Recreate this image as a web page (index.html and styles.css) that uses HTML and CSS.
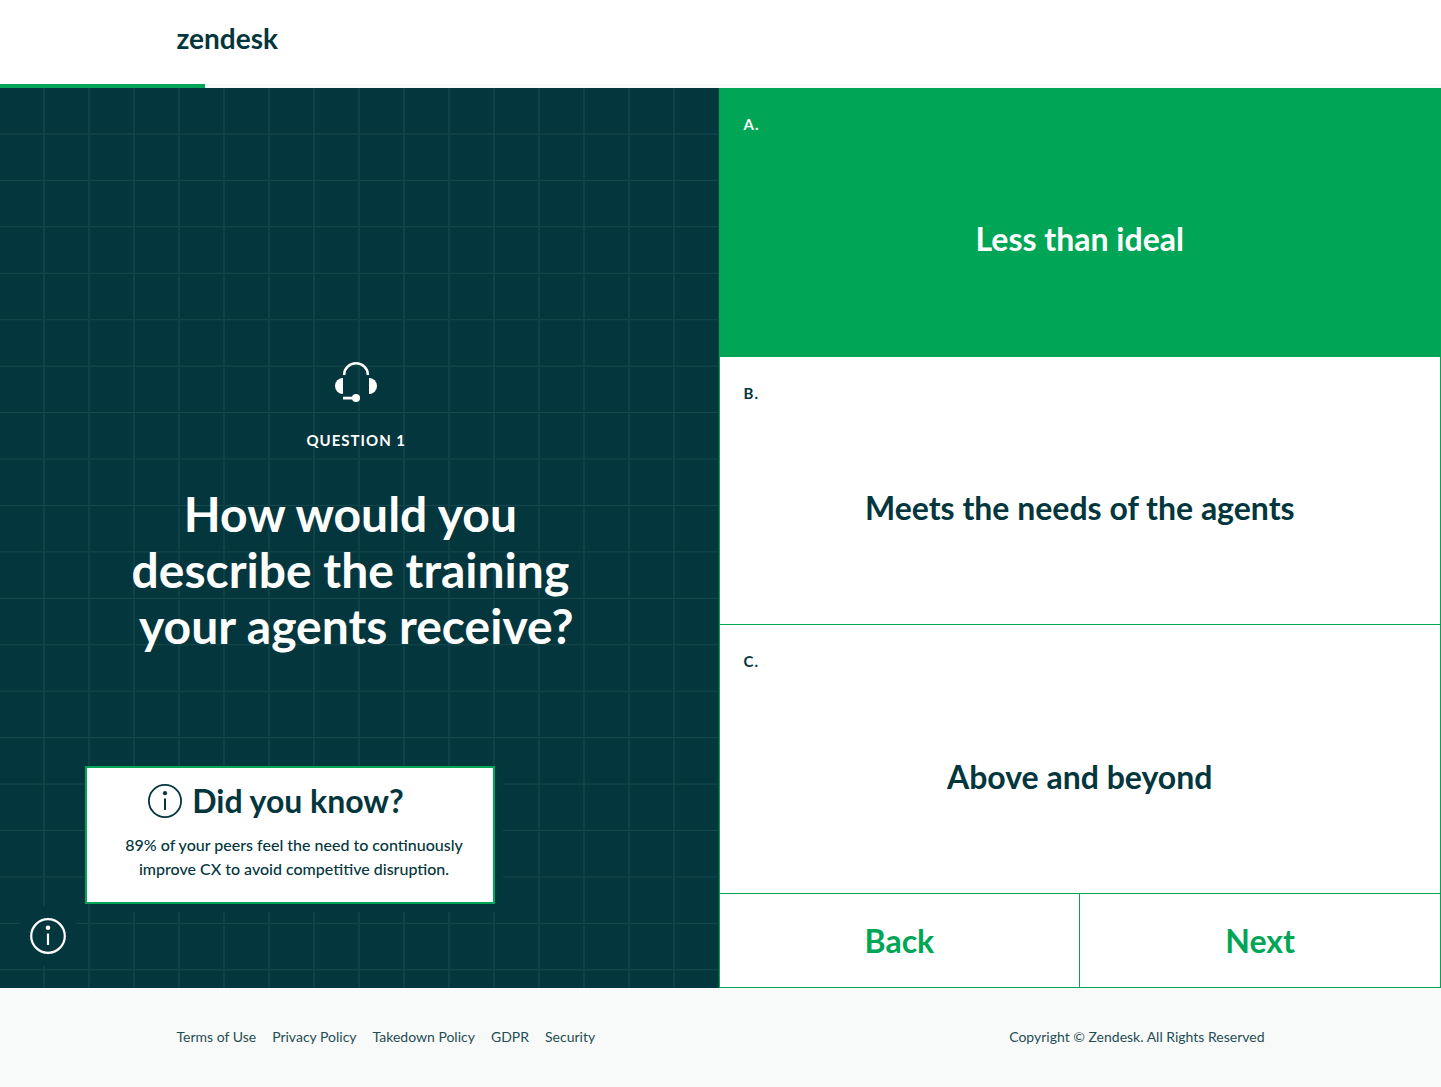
FILE: index.html
```
<!DOCTYPE html>
<html lang="en">
<head>
    <meta charset="UTF-8">
    <meta name="viewport" content="width=device-width, initial-scale=1.0">
    <title>Zendesk</title>
    <link rel="stylesheet" href="styles.css">
</head>
<body>

    <header class="header">
        <div class="container">
            <a class="logo" href="#">zendesk</a>
        </div>
    </header>

    <div class="progress">
        <div class="progress-bar" style="width: 14.25%"></div>
    </div>

    <main class="quiz">
        <section class="question">
            <svg class="headset" width="42" height="40" viewBox="0 0 42 40" fill="#fff">
                <path d="M9.2 13V12.5a11.8 11.2 0 0 1 23.6 0V13" fill="none" stroke="#fff" stroke-width="2.6"/>
                <path d="M8 16v16a8 8 0 0 1 0-16z"/>
                <path d="M34 16v16a8 8 0 0 0 0-16z"/>
                <path d="M8 34.7h10v2.8H8z"/>
                <circle cx="21" cy="36" r="4"/>
            </svg>
            <p class="question-number">Question 1</p>
            <h1 class="question-title">How would you&nbsp;<br>describe the training&nbsp;<br>your agents receive?</h1>

            <!-- Info popup -->
            <aside class="tip">
                <h2 class="tip-title">
                    <svg width="34" height="34" viewBox="0 0 34 34" fill="none" stroke="#03363d">
                        <circle cx="17" cy="17" r="16.1" stroke-width="1.8"/>
                        <circle cx="17" cy="9.2" r="2.1" fill="#03363d" stroke="none"/>
                        <path d="M17 14.5V26" stroke-width="2"/>
                    </svg>
                    Did you know?
                </h2>
                <p class="tip-text">89% of your peers feel the need to continuously<br>improve CX to avoid competitive disruption.</p>
            </aside>
            <button class="info-button" type="button" aria-label="Did you know?">
                <svg width="36" height="36" viewBox="0 0 36 36" fill="none" stroke="#fff">
                    <circle cx="18" cy="18" r="16.8" stroke-width="2.2"/>
                    <circle cx="18" cy="9.8" r="2.3" fill="#fff" stroke="none"/>
                    <path d="M18 15.5V27" stroke-width="2.2"/>
                </svg>
            </button>
        </section>

        <section class="answers">
            <button class="answer selected" type="button">
                <span class="answer-letter">A.</span>
                <span class="answer-text">Less than ideal</span>
            </button>
            <button class="answer" type="button">
                <span class="answer-letter">B.</span>
                <span class="answer-text">Meets the needs of the agents</span>
            </button>
            <button class="answer" type="button">
                <span class="answer-letter">C.</span>
                <span class="answer-text">Above and beyond</span>
            </button>
            <div class="nav">
                <button class="nav-button" type="button">Back</button>
                <button class="nav-button" type="button">Next</button>
            </div>
        </section>
    </main>

    <footer class="footer">
        <div class="container">
            <nav class="footer-links">
                <a href="#">Terms of Use</a>
                <a href="#">Privacy Policy</a>
                <a href="#">Takedown Policy</a>
                <a href="#">GDPR</a>
                <a href="#">Security</a>
            </nav>
            <p class="copyright">Copyright © Zendesk. All Rights Reserved</p>
        </div>
    </footer>

</body>
</html>
```

FILE: styles.css
```
* {
    box-sizing: border-box;
}

body {
    margin: 0;
    min-height: 100vh;
    display: flex;
    flex-direction: column;
    background: #f8faf9;
    color: #03363d;
    font-family: Lato, sans-serif;
}

h1, h2, p {
    margin: 0;
}

button {
    font-family: inherit;
    color: inherit;
    border: none;
    margin: 0;
    cursor: pointer;
}

svg {
    display: block;
}

.container {
    width: 100%;
    max-width: 1088px;
    margin: 0 auto;
    display: flex;
    align-items: center;
    justify-content: space-between;
}

/* Header */
.header {
    background: #fff;
    padding: 20px 0 28px;
}

.logo {
    color: #03363d;
    font-size: 28px;
    font-weight: 700;
    line-height: 36px;
    text-decoration: none;
}

.progress {
    height: 4px;
    background: #f8faf9;
}

.progress-bar {
    height: 100%;
    background: #00a656;
}

.quiz {
    flex: 1;
    display: grid;
    grid-template-columns: calc(50% - 2px) 1fr;
}

/* Question panel */
.question {
    position: relative;
    display: flex;
    flex-direction: column;
    align-items: center;
    justify-content: center;
    padding: 0 6px 60px 0;
    color: #fff;
    text-align: center;
    background-color: #03363d;
    background-image:
        linear-gradient(to left, #0f4246 2px, transparent 2px),
        linear-gradient(to top, #17494c 1px, transparent 1px);
    background-size: 6.26% 5.16%;
}

.question-number {
    margin: 28px 0 36px;
    font-size: 15px;
    font-weight: 700;
    line-height: 20px;
    letter-spacing: 1px;
    text-transform: uppercase;
}

.question-title {
    font-size: 48px;
    font-weight: 700;
    line-height: 56px;
}

.tip {
    position: absolute;
    left: 85px;
    bottom: 84px;
    width: 410px;
    padding: 13px 14px 21px 22px;
    border: 2px solid #00a656;
    background: #fff;
    box-shadow: 8px 8px 0 #03363d;
    color: #03363d;
}

.tip-title {
    display: flex;
    align-items: center;
    justify-content: center;
    gap: 10px;
    margin: 0 36px 12px 0;
    font-size: 32px;
    line-height: 40px;
}

.tip-text {
    font-size: 16px;
    font-weight: 500;
    line-height: 24px;
}

.info-button {
    position: absolute;
    left: 20px;
    bottom: 22px;
    padding: 12px 10px;
    background: #03363d;
}

/* Answers */
.answers {
    display: flex;
    flex-direction: column;
    background: #fff;
    border: 1px solid #00a656;
    border-top: none;
}

.answer {
    flex: 1;
    display: flex;
    flex-direction: column;
    padding: 26px 24px 12px;
    background: #fff;
    border-bottom: 1px solid #00a656;
}

.answer.selected {
    background: #00a656;
    color: #fff;
}

.answer-letter {
    align-self: flex-start;
    font-size: 15px;
    font-weight: 700;
    line-height: 20px;
    letter-spacing: 1px;
}

.answer-text {
    flex: 1;
    align-self: center;
    display: flex;
    align-items: center;
    font-size: 32px;
    font-weight: 700;
}

.nav {
    display: flex;
    height: 93px;
}

.nav-button {
    flex: 1;
    background: #fff;
    color: #00a656;
    font-size: 32px;
    font-weight: 700;
}

.nav-button + .nav-button {
    border-left: 1px solid #00a656;
}

/* Footer */
.footer {
    padding: 38px 0 39px;
    color: #1f4d53;
    font-size: 14px;
    line-height: 22px;
}

.footer-links {
    display: flex;
    gap: 16px;
}

.footer-links a {
    color: inherit;
    text-decoration: none;
}
```
